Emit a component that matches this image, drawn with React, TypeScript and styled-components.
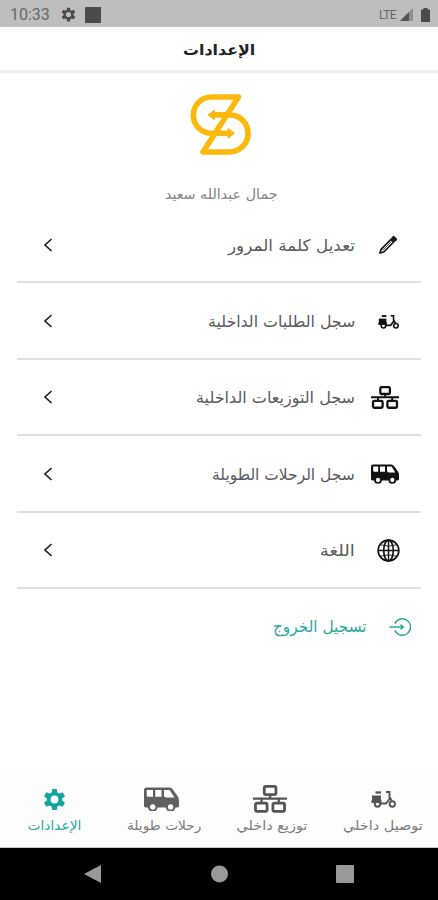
import React from "react";
import styled, { createGlobalStyle } from "styled-components";

const Global = createGlobalStyle`
  * { box-sizing: border-box; }
  body { margin: 0; background: #fff; font-family: "DejaVu Sans", "Noto Sans", sans-serif; }
  svg { display: block; flex: none; }
`;

const Screen = styled.div`
  width: 438px;
  height: 900px;
  display: flex;
  flex-direction: column;
  background: #fff;
  overflow: hidden;
`;

const StatusBar = styled.div`
  height: 27px;
  flex: none;
  display: flex;
  align-items: center;
  padding: 2px 8px 0 10px;
  background: #bebebe;
  color: #686868;
  font-family: Roboto, sans-serif;
`;
const Clock = styled.span`
  font-size: 16px;
  width: 51px;
`;
const Square = styled.span`
  width: 16px;
  height: 16px;
  margin-left: 9px;
  background: #4b4b4b;
`;
const Network = styled.span`
  margin-left: auto;
  margin-right: 4px;
  font-size: 12px;
  letter-spacing: -0.6px;
`;
const Battery = styled.svg`
  margin-left: 8px;
`;

const Header = styled.header`
  height: 46px;
  flex: none;
  display: flex;
  align-items: center;
  justify-content: center;
  padding: 3px 0 0 1px;
  border-bottom: 3px solid #eeeeee;
`;

const Text = styled.span<{ $size: number; $color: string; $bold?: boolean; $stretch?: number; $origin?: string }>`
  display: block;
  direction: rtl;
  white-space: nowrap;
  line-height: 24px;
  font-size: ${(p) => p.$size}px;
  font-weight: ${(p) => (p.$bold ? 700 : 400)};
  color: ${(p) => p.$color};
  transform: scaleX(${(p) => p.$stretch ?? 1});
  transform-origin: ${(p) => p.$origin ?? "center"};
`;

const Profile = styled.section`
  height: 134px;
  flex: none;
  display: flex;
  flex-direction: column;
  align-items: center;
  padding: 20px 0 0 4px;
  gap: 26px;
`;

const List = styled.ul`
  list-style: none;
  margin: 0;
  padding: 0 17px;
  display: flex;
  flex-direction: column;
`;
const Row = styled.li`
  height: 76.4px;
  display: flex;
  direction: rtl;
  align-items: center;
  border-bottom: 2px solid #e0e0e0;
  padding: 1px 18px 0 26px;
`;
const IconSlot = styled.span<{ $wide?: boolean }>`
  width: 30px;
  height: 28px;
  display: flex;
  align-items: center;
  justify-content: ${(p) => (p.$wide ? "flex-end" : "center")};
  margin-left: ${(p) => (p.$wide ? -2 : 0)}px;
  width: ${(p) => (p.$wide ? 32 : 30)}px;
  flex: none;
`;
const RowText = styled.div`
  flex: 1;
  display: flex;
  padding: 2px 18px 0 0;
`;
const Logout = styled.div`
  height: 76px;
  display: flex;
  direction: rtl;
  align-items: center;
  padding-right: 27px;
  gap: 22px;
`;

const Tabs = styled.nav`
  margin-top: auto;
  height: 73px;
  flex: none;
  display: grid;
  grid-template-columns: repeat(4, 109.5px);
  direction: rtl;
  background: #fdfdfd;
  border-bottom: 1px solid #c8c8c8;
`;
const Tab = styled.div<{ $inset: number }>`
  display: flex;
  flex-direction: column;
  align-items: center;
  padding-top: 9px;
  padding-right: ${(p) => p.$inset}px;
`;
const TabIcon = styled.span<{ $gap: number }>`
  height: 30px;
  display: flex;
  align-items: center;
  padding-right: ${(p) => p.$gap}px;
`;
const SystemBar = styled.div`
  height: 52px;
  flex: none;
  display: flex;
  align-items: center;
  justify-content: space-between;
  padding: 0 84px 0 84px;
  background: #000;
`;

const Gear = ({ size, color }: { size: number; color: string }) => (
  <svg width={size} height={size} viewBox="0 0 24 24" fill={color} fillRule="evenodd">
    <path d="M9.600 1h4.800l.6 3.600 2 1.200 3.500-1.300 2.400 4.100L20 10.900v2.200l2.900 2.300-2.400 4.100-3.500-1.300-2 1.200-.6 3.600H9.600L9 19.400l-2-1.200-3.500 1.300-2.400-4.100L4 13.100v-2.200L1.100 8.600l2.400-4.100L7 5.800l2-1.200zM12 7.900a4.100 4.100 0 1 0 0 8.200 4.100 4.100 0 0 0 0-8.200z" />
  </svg>
);

const Logo = () => (
  <svg width="62" height="63" viewBox="0 0 62 63" fill="none" stroke="#fcb80c" strokeWidth="5.600" strokeLinejoin="round">
    <path d="M38 40.300H21.500A18 18 0 0 1 21.500 4H48.500L13 59H39.500A18 18 0 0 0 39.500 21.900H24" />
    <path d="M18 21.900L24.500 17V26.800ZM44.500 40.300L38 35.400V45.200Z" fill="#fcb80c" strokeWidth="1" />
  </svg>
);

const Pencil = () => (
  <svg width="20" height="20" viewBox="0 0 20 20" fill="none" stroke="#111" strokeWidth="1.700" strokeLinejoin="round">
    <path d="M2 18L3 14.300L13 4.300L15.700 7L5.700 17Z" />
    <path d="M14 3.300L15.600 1.700L18.300 4.400L16.700 6Z" fill="#111" />
    <path d="M4.500 15.500L13.700 6.300" strokeWidth="0.700" />
  </svg>
);

const Scooter = ({ size, color }: { size: number; color: string }) => (
  <svg width={size} height={size * 0.72} viewBox="0 0 25 18" fill="none" stroke={color} strokeWidth="1.900">
    <path d="M1 5.500H10V13H1Z" fill={color} stroke="none" />
    <path d="M4.500 2.500H10" strokeWidth="2.300" />
    <path d="M9 13.500H15L18.500 9V2H15M18.500 7L21 11" />
    <circle cx="6.500" cy="14" r="2.700" fill="#fff" />
    <circle cx="21.300" cy="14" r="2.700" fill="#fff" />
    <path d="M0.500 11.500H10.500" strokeWidth="2.800" />
  </svg>
);

const NetworkTree = ({ width, color }: { width: number; color: string }) => (
  <svg width={width} height={width * 0.82} viewBox="0 0 28 23" fill="none" stroke={color} strokeWidth="2.300">
    <rect x="9.300" y="1.200" width="9.600" height="6.800" rx="1.300" />
    <path d="M14.100 8V11.300M0 11.300H28M7 11.300V15M21.200 11.300V15" strokeWidth="1.900" />
    <rect x="2" y="15" width="9.600" height="6.800" rx="1.300" />
    <rect x="16.400" y="15" width="9.600" height="6.800" rx="1.300" />
  </svg>
);

const Bus = ({ width, color }: { width: number; color: string }) => (
  <svg width={width} height={width * 0.714} viewBox="0 0 28 20">
    <path d="M2 0.500H20.500Q22 0.500 23 2L27 7.500Q28 9 28 11V15Q28 16.500 26.500 16.500H1.500Q0 16.500 0 15V2.500Q0 0.500 2 0.500Z" fill={color} />
    <path d="M2.200 2.500H7.200V7.800H3.200Q2.200 7.800 2.200 6.800ZM9 2.500H14V7.800H9ZM16 2.500H20.500L24.300 8.500H18Q16 8.500 16 6.500Z" fill="#fff" />
    <circle cx="7" cy="16" r="3" fill="#fff" stroke={color} strokeWidth="1.700" />
    <circle cx="21.300" cy="16" r="3" fill="#fff" stroke={color} strokeWidth="1.700" />
  </svg>
);

const Globe = () => (
  <svg width="23" height="23" viewBox="0 0 24 24" fill="none" stroke="#111" strokeWidth="1.700">
    <circle cx="12" cy="12" r="10.800" />
    <ellipse cx="12" cy="12" rx="5" ry="10.800" />
    <path d="M1 12H23M12 1V23" strokeWidth="1.500" />
    <path d="M3.500 6Q12 9 20.500 6M3.500 18Q12 15 20.500 18" strokeWidth="0.900" />
  </svg>
);

const Exit = () => (
  <svg width="22" height="20" viewBox="0 0 23 20" fill="none" stroke="#2aa8a2" strokeWidth="1.500">
    <path d="M6.100 6.500A8.600 8.600 0 1 1 6.100 13.500M0.500 10H15M12 7.500L15 10L12 12.500" />
  </svg>
);

const Chevron = () => (
  <svg width="10" height="14" viewBox="0 0 10 14" fill="none" stroke="#222" strokeWidth="1.700">
    <path d="M8.500 1L2 7L8.500 13" />
  </svg>
);

const rows = [
  { label: "تعديل كلمة المرور", icon: <Pencil />, stretch: 1.05 },
  { label: "سجل الطلبات الداخلية", icon: <Scooter size={21} color="#111" />, stretch: 0.987 },
  { label: "سجل التوزيعات الداخلية", icon: <NetworkTree width={28} color="#111" />, stretch: 1, wide: true },
  { label: "سجل الرحلات الطويلة", icon: <Bus width={28} color="#111" />, stretch: 0.966, wide: true },
  { label: "اللغة", icon: <Globe />, stretch: 1.14 },
];

const tabs = [
  { label: "توصيل داخلي", icon: <Scooter size={25} color="#555" />, stretch: 1.11, inset: 0, gap: 0 },
  { label: "توزيع داخلي", icon: <NetworkTree width={34} color="#555" />, stretch: 1.11, inset: 3, gap: 4 },
  { label: "رحلات طويلة", icon: <Bus width={35} color="#606060" />, stretch: 1.06, inset: 0, gap: 6 },
  { label: "الإعدادات", icon: <Gear size={23} color="#10a69f" />, stretch: 1.06, inset: 0, gap: 0, active: true },
];

export default function App() {
  return (
    <Screen>
      <Global />
      <StatusBar>
        <Clock>10:33</Clock>
        <Gear size={15} color="#4b4b4b" />
        <Square />
        <Network>LTE</Network>
        <svg width="13" height="13" viewBox="0 0 13 13" fill="#555">
          <path d="M0 13L13 0V13Z" opacity="0.45" />
          <path d="M0 13L9 4V13Z" />
        </svg>
        <Battery width="9" height="14" viewBox="0 0 9 14" fill="#4b4b4b">
          <path d="M2.500 0H6.500V1.500H9V14H0V1.500H2.500Z" />
        </Battery>
      </StatusBar>
      <Header>
        <Text $size={15} $color="#222" $bold $stretch={1.06}>الإعدادات</Text>
      </Header>
      <Profile>
        <Logo />
        <Text $size={14} $color="#858585" $stretch={1.02}>جمال عبدالله سعيد</Text>
      </Profile>
      <List>
        {rows.map((r) => (
          <Row key={r.label}>
            <IconSlot $wide={r.wide}>{r.icon}</IconSlot>
            <RowText>
              <Text $size={16} $color="#5a5a5a" $stretch={r.stretch} $origin="right">{r.label}</Text>
            </RowText>
            <Chevron />
          </Row>
        ))}
      </List>
      <Logout>
        <Exit />
        <Text $size={16} $color="#2aa8a2" $stretch={0.96} $origin="right">تسجيل الخروج</Text>
      </Logout>
      <Tabs>
        {tabs.map((t) => (
          <Tab key={t.label} $inset={t.inset}>
            <TabIcon $gap={t.gap}>{t.icon}</TabIcon>
            <Text $size={13} $color={t.active ? "#2aa8a2" : "#7c7c7c"} $stretch={t.stretch}>{t.label}</Text>
          </Tab>
        ))}
      </Tabs>
      <SystemBar>
        <svg width="17" height="18" viewBox="0 0 17 18" fill="#999"><path d="M0 9L17 0V18Z" /></svg>
        <svg width="18" height="18" viewBox="0 0 18 18" fill="#999"><circle cx="9.500" cy="9" r="8.500" /></svg>
        <svg width="18" height="18" viewBox="0 0 18 18" fill="#999"><rect width="18" height="18" rx="1" /></svg>
      </SystemBar>
    </Screen>
  );
}
